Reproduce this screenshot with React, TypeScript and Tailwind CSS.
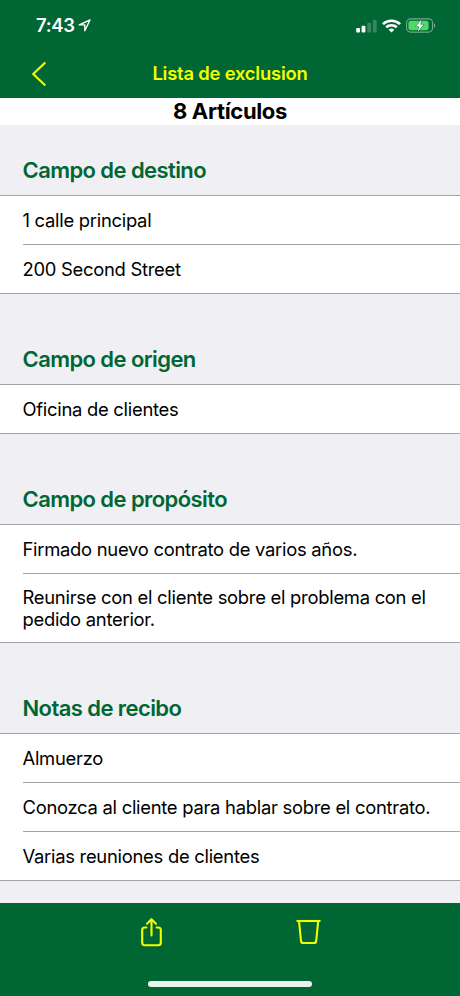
const sections = [
  { title: 'Campo de destino', head: 'h-[70px]', items: ['1 calle principal', '200 Second Street'] },
  { title: 'Campo de origen', head: 'h-[90px]', items: ['Oficina de clientes'] },
  {
    title: 'Campo de propósito',
    head: 'h-[90px]',
    items: ['Firmado nuevo contrato de varios años.', 'Reunirse con el cliente sobre el problema con el pedido anterior.'],
  },
  {
    title: 'Notas de recibo',
    head: 'h-[90px]',
    items: ['Almuerzo', 'Conozca al cliente para hablar sobre el contrato.', 'Varias reuniones de clientes'],
  },
]

function StatusBar() {
  return (
    <div className="flex h-[51px] items-center justify-between pl-[36px] pr-[24px] text-white">
      <div className="flex items-center gap-[3px]">
        <span className="text-[18.4px] font-semibold leading-none tracking-[-0.3px]">7:43</span>
        <svg width="13" height="13" viewBox="0 0 13 13" fill="none" stroke="currentColor" strokeWidth="1.4" strokeLinejoin="round">
          <path d="M12 1 L1.2 5.9 H6.8 V11.8 Z" />
        </svg>
      </div>
      <div className="flex items-center">
        <svg width="22" height="14" viewBox="0 0 22 14" fill="currentColor">
          <rect x="0.2" y="9" width="3.8" height="4.4" rx="1" />
          <rect x="5.6" y="6.8" width="3.8" height="6.6" rx="1" />
          <rect x="11.3" y="3.8" width="3.8" height="9.6" rx="1" opacity=".22" />
          <rect x="16.9" y="0.8" width="3.8" height="12.6" rx="1" opacity=".22" />
        </svg>
        <svg className="ml-[4px]" width="19" height="14" viewBox="0 0 18 14" preserveAspectRatio="none" fill="none" stroke="currentColor" strokeWidth="2.6">
          <path d="M0.9 5.1 A11.6 11.6 0 0 1 17.1 5.1" />
          <path d="M4 8.3 A7.2 7.2 0 0 1 14 8.3" />
          <path d="M9 13.5 L6.3 10.8 A3.9 3.9 0 0 1 11.7 10.8 Z" fill="currentColor" stroke="none" />
        </svg>
        <svg className="ml-[5px]" width="30" height="15" viewBox="0 0 30 15" fill="none">
          <rect x="0.6" y="0.9" width="26" height="13.2" rx="4" stroke="#fff" strokeOpacity=".45" strokeWidth="1.1" />
          <rect x="2.4" y="2.7" width="20.2" height="9.6" rx="2.3" fill="#4cd964" />
          <path d="M28 5.3 C29.6 6 29.6 9 28 9.7 Z" fill="#fff" fillOpacity=".5" />
          <path d="M15.6 1.6 L9.8 8.4 H13.2 L11.8 13.6 L17.8 6.6 H14.3 Z" fill="#fff" stroke="#006633" strokeWidth="1" paintOrder="stroke" />
        </svg>
      </div>
    </div>
  )
}

function NavBar() {
  return (
    <div className="grid h-[45px] grid-cols-[60px_1fr_60px] items-center text-[#f2ff00]">
      <svg className="ml-[31px]" width="17" height="26" viewBox="0 0 17 26" fill="none" stroke="currentColor" strokeWidth="2.2" strokeLinejoin="round">
        <path d="M14.3 1.5 L2.2 13 L14.3 24.5" />
      </svg>
      <h1 className="text-center text-[18.4px] font-semibold leading-none tracking-[-0.2px]">Lista de exclusion</h1>
    </div>
  )
}

function Toolbar() {
  return (
    <footer className="flex h-[93px] flex-col bg-[#006633] text-[#f2ff00]">
      <div className="grid h-[60px] grid-cols-2 pl-[140px] pr-[8px]">
        <svg className="mt-[14px]" width="23" height="30" viewBox="0 0 23 30" fill="none" stroke="currentColor" strokeWidth="2.1" strokeLinecap="round" strokeLinejoin="round">
          <path d="M6.4 10.5 H4.7 A2.5 2.5 0 0 0 2.2 13 V25.7 A2.5 2.5 0 0 0 4.7 28.2 H18.3 A2.5 2.5 0 0 0 20.8 25.7 V13 A2.5 2.5 0 0 0 18.3 10.5 H16.6" />
          <path d="M11.5 18.5 V2.4 M7 6.7 L11.5 2.2 L16 6.7" />
        </svg>
        <svg className="mt-[15px]" width="26" height="28" viewBox="0 0 26 28" fill="none" stroke="currentColor" strokeWidth="2.1" strokeLinejoin="round">
          <path d="M0.5 3 H24.5" />
          <path d="M3 3 L5 23 A2.3 2.3 0 0 0 7.2 25 H18 A2.3 2.3 0 0 0 20.2 23 L22.2 3" />
        </svg>
      </div>
      <div className="mx-auto mt-[18px] h-[6px] w-[164px] rounded-full bg-[#eaf2ee]" />
    </footer>
  )
}

export default function App() {
  return (
    <div className="flex h-[996px] w-[460px] flex-col overflow-hidden bg-[#efeff4] font-['Inter',sans-serif] text-black">
      <header className="h-[98px] shrink-0 bg-[#006633]">
        <StatusBar />
        <NavBar />
      </header>
      <main className="min-h-0 flex-1">
        <div className="h-[27px] bg-white text-center text-[22px] font-bold leading-[27px] tracking-[-0.35px]">8 Artículos</div>
        {sections.map((section) => (
          <section key={section.title}>
            <h2 className={`${section.head} flex items-end pb-[11px] pl-[22.5px] text-[22px] font-semibold leading-[27px] tracking-[-0.58px] text-[#006633]`}>
              {section.title}
            </h2>
            <ul className="border-y border-[#a3a3a8] bg-white pl-[23px]">
              {section.items.map((item) => (
                <li
                  key={item}
                  className="flex min-h-12 items-center border-b border-[#a3a3a8] box-content py-0 pr-5 text-[18.4px] leading-[22px] tracking-[-0.27px] last:border-b-0"
                >
                  <span className="-ml-[0.5px] py-3">{item}</span>
                </li>
              ))}
            </ul>
          </section>
        ))}
      </main>
      <Toolbar />
    </div>
  )
}
